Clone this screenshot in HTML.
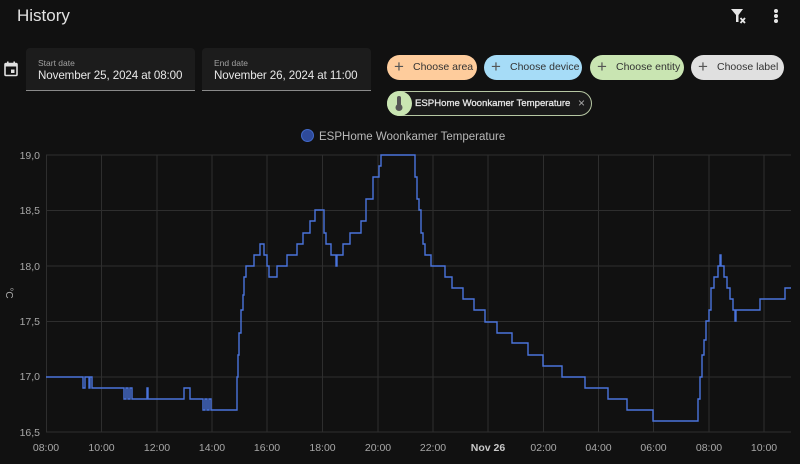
<!DOCTYPE html>
<html><head><meta charset="utf-8"><style>
*{margin:0;padding:0;box-sizing:border-box}
body{width:800px;height:464px;background:#111111;font-family:"Liberation Sans",sans-serif;color:#e1e1e1;position:relative;overflow:hidden}
.abs{position:absolute;white-space:nowrap}
.title{left:17px;top:6px;font-size:17px;color:#e1e1e1}
.df{background:#1c1c1c;border-bottom:1px solid #8a8a8a;border-radius:4px 4px 0 0;height:43px;top:48px}
.df .l{position:absolute;left:12px;top:10px;font-size:8.5px;color:#a0a0a0}
.df .v{position:absolute;left:12px;top:21px;font-size:11.6px;color:#e8e8e8;white-space:nowrap;letter-spacing:-0.1px}
.chip{top:55px;height:25px;border-radius:13px;font-size:10.5px;color:#333;line-height:25px;padding-left:26px}
.chip:before{content:"+";position:absolute;left:7px;top:-1px;font-size:17px;color:#555;font-weight:300}
</style></head><body>
<div class="abs title">History</div>
<svg class="abs" style="left:728px;top:6px" width="24" height="20" viewBox="0 0 24 20"><path d="M3 3 H15 L10.5 9 V16 H8 V9 Z" fill="#e6e6e6"/><path d="M12.5 12 L17 17 M17 12 L12.5 17" stroke="#e6e6e6" stroke-width="1.8"/></svg>
<div class="abs" style="left:774px;top:9px;width:4px;height:4px;border-radius:2px;background:#e6e6e6;box-shadow:0 5px 0 #e6e6e6,0 10px 0 #e6e6e6"></div>
<svg class="abs" style="left:4px;top:61px" width="14" height="16" viewBox="0 0 14 16"><rect x="1" y="2.5" width="12" height="12" rx="1" fill="none" stroke="#e0e0e0" stroke-width="1.6"/><rect x="1" y="2.5" width="12" height="3" fill="#e0e0e0"/><rect x="3" y="0.5" width="1.6" height="3" fill="#e0e0e0"/><rect x="9.4" y="0.5" width="1.6" height="3" fill="#e0e0e0"/><rect x="7" y="8.5" width="3.5" height="3.5" fill="#e0e0e0"/></svg>
<div class="abs df" style="left:26px;width:169px"><div class="l">Start date</div><div class="v">November 25, 2024 at 08:00</div></div>
<div class="abs df" style="left:202px;width:169px"><div class="l">End date</div><div class="v">November 26, 2024 at 11:00</div></div>
<div class="abs chip" style="left:387px;width:90px;background:#fecc9c">Choose area</div>
<div class="abs chip" style="left:484px;width:98px;background:#a6dcf7">Choose device</div>
<div class="abs chip" style="left:590px;width:94px;background:#c9e5b2">Choose entity</div>
<div class="abs chip" style="left:691px;width:93px;background:#e0e0e0">Choose label</div>
<div class="abs" style="left:387px;top:91px;width:205px;height:25px;border-radius:13px;border:1px solid #b6c7a3;background:#1a1a1a"></div>
<div class="abs" style="left:387px;top:91px;width:25px;height:25px;border-radius:13px;background:#c9e5b2"></div>
<svg class="abs" style="left:393px;top:95px" width="12" height="17" viewBox="0 0 12 17"><rect x="4" y="1" width="4" height="10" rx="2" fill="#555"/><circle cx="6" cy="12.5" r="3.5" fill="#555"/></svg>
<div class="abs" style="left:415px;top:97.5px;font-size:9.6px;color:#e6e6e6;-webkit-text-stroke:0.3px #e6e6e6">ESPHome Woonkamer Temperature</div>
<div class="abs" style="left:578px;top:96px;font-size:12px;color:#aaa">×</div>
<svg class="abs" style="left:0;top:0" width="800" height="464">
<circle cx="307.5" cy="135.5" r="6" fill="#2e4a9a" stroke="#4169c9" stroke-width="1"/>
<text x="319" y="140" font-size="11.5" fill="#b8b8b8" font-family="Liberation Sans">ESPHome Woonkamer Temperature</text>
<g stroke="#2e2e2e" stroke-width="1">
<line x1="46" y1="155" x2="791" y2="155"/><line x1="46" y1="210.5" x2="791" y2="210.5"/><line x1="46" y1="266" x2="791" y2="266"/><line x1="46" y1="321.5" x2="791" y2="321.5"/><line x1="46" y1="377" x2="791" y2="377"/><line x1="46" y1="432" x2="791" y2="432"/>
<line x1="46.5" y1="155" x2="46.5" y2="432"/><line x1="101.5" y1="155" x2="101.5" y2="432"/><line x1="157" y1="155" x2="157" y2="432"/><line x1="212" y1="155" x2="212" y2="432"/><line x1="267" y1="155" x2="267" y2="432"/><line x1="322.5" y1="155" x2="322.5" y2="432"/><line x1="378" y1="155" x2="378" y2="432"/><line x1="433" y1="155" x2="433" y2="432"/><line x1="488" y1="155" x2="488" y2="432"/><line x1="543.5" y1="155" x2="543.5" y2="432"/><line x1="598.5" y1="155" x2="598.5" y2="432"/><line x1="653.5" y1="155" x2="653.5" y2="432"/><line x1="709" y1="155" x2="709" y2="432"/><line x1="764" y1="155" x2="764" y2="432"/>
</g>
<g font-size="10.5" fill="#a8a8a8" font-family="Liberation Sans" text-anchor="end">
<text x="40" y="159">19,0</text><text x="40" y="214">18,5</text><text x="40" y="270">18,0</text><text x="40" y="325">17,5</text><text x="40" y="380">17,0</text><text x="40" y="436">16,5</text>
</g>
<text x="6" y="293" font-size="10" fill="#a8a8a8" transform="rotate(90 6 293)" text-anchor="middle">°C</text>
<g font-size="10.5" fill="#a8a8a8" font-family="Liberation Sans" text-anchor="middle">
<text x="46" y="451">08:00</text><text x="101.5" y="451">10:00</text><text x="157" y="451">12:00</text><text x="212" y="451">14:00</text><text x="267" y="451">16:00</text><text x="322.5" y="451">18:00</text><text x="378" y="451">20:00</text><text x="433" y="451">22:00</text><text x="488" y="451" font-weight="bold" fill="#c8c8c8">Nov 26</text><text x="543.5" y="451">02:00</text><text x="598.5" y="451">04:00</text><text x="653.5" y="451">06:00</text><text x="709" y="451">08:00</text><text x="764" y="451">10:00</text>
</g>
<path fill="none" stroke="#4a74dc" stroke-width="1.4" d="M46 377 H83 V388 H85 V377 H89 V388 H90 V377 H92 V388 H124 V399 H126 V388 H128 V399 H130 V388 H132 V399 H147 V388 H148 V399 H184 V388 H190 V399 H203 V410 H205 V399 H207 V410 H209 V399 H211 V410 H237 V377 H238 V355 H239 V333 H241 V310 H243 V295 H244 V277 H246 V266 H254 V255 H260 V244 H264 V255 H267 V266 H269 V277 H277 V266 H287 V255 H297 V244 H303 V233 H310 V221 H315 V210 H324 V233 H326 V244 H331 V255 H336 V266 H337 V255 H343 V244 H350 V233 H361 V221 H366 V199 H373 V177 H379 V166 H381 V155 H415 V177 H417 V199 H419 V210 H421 V233 H423 V244 H425 V255 H431 V266 H445 V277 H452 V288 H463 V299 H474 V310 H485 V322 H497 V333 H512 V343 H528 V355 H543 V366 H562 V377 H585 V388 H608 V399 H627 V410 H653 V421 H698 V399 H700 V377 H702 V355 H704 V340 H706 V321 H709 V310 H711 V288 H714 V277 H718 V266 H720 V255 H721 V266 H724 V277 H727 V288 H730 V299 H733 V310 H735 V321 H736 V310 H760 V299 H785 V288 H791"/>
</svg>
</body></html>
